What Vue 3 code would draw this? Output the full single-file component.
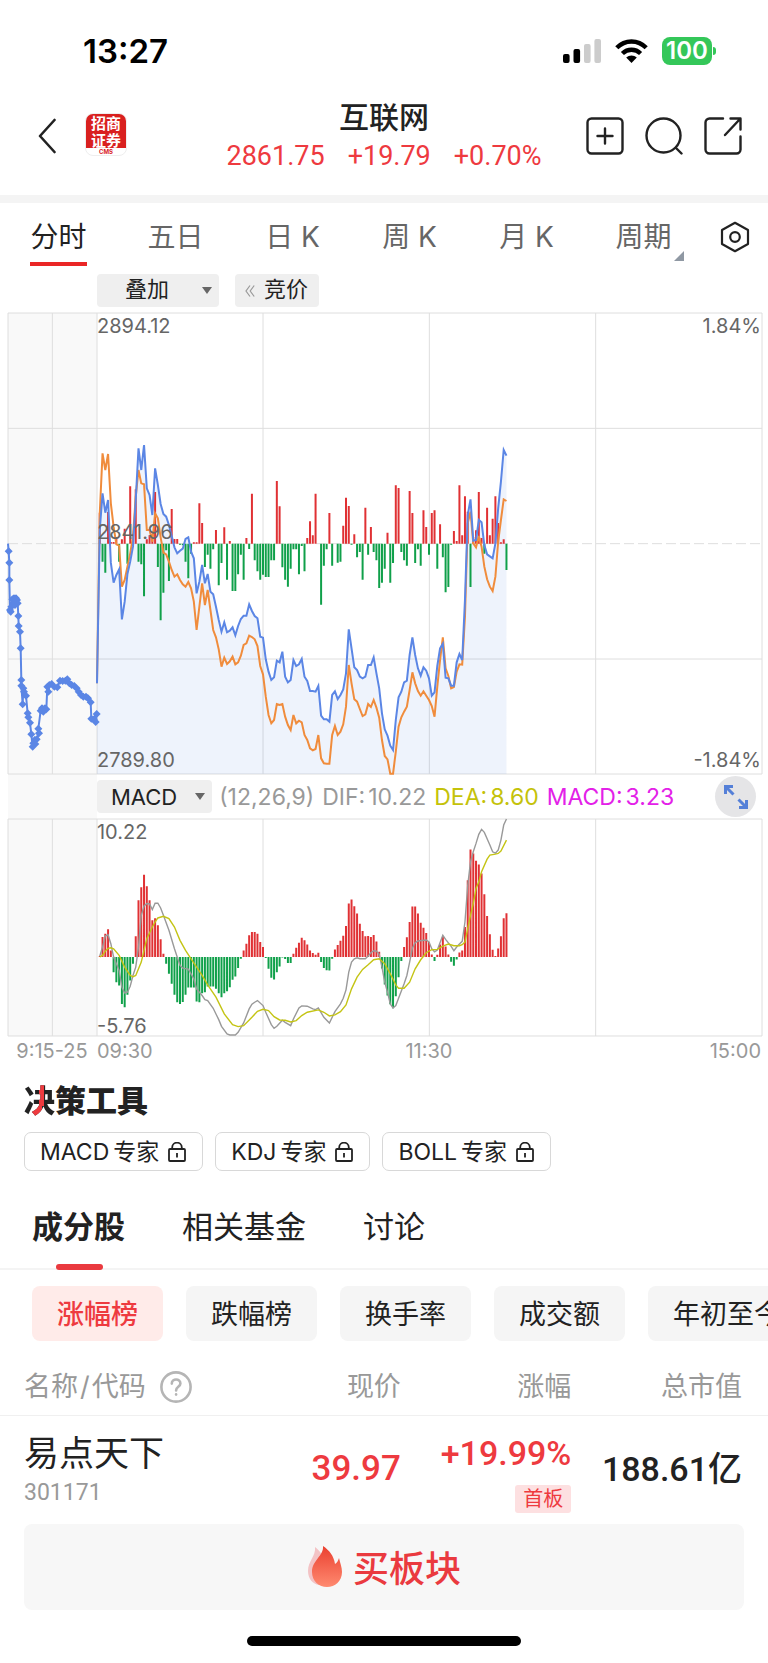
<script setup>
/**
 * 板块行情页 — 分时走势 + MACD + 成分股
 */
import { ref, computed } from 'vue'

const periods = ['分时', '五日', '日 K', '周 K', '月 K', '周期']
const activePeriod = ref(0)

const tools = ['MACD', 'KDJ', 'BOLL']

const sections = ['成分股', '相关基金', '讨论']
const activeSection = ref(0)

const ranks = ['涨幅榜', '跌幅榜', '换手率', '成交额', '年初至今']
const activeRank = ref(0)

const stocks = [
  { name: '易点天下', code: '301171', price: '39.97', change: '+19.99%', tag: '首板', cap: '188.61亿' }
]

// ===== 坐标 =====
// 图表单位为三分之一像素，每分钟一个点
const OPEN_X = 267
const STEP = 8.3
const PRICE_TOP = 351
const PRICE_ZERO = 692
const PRICE_H = 1383
const MACD_TOP = -12
const MACD_ZERO = 413

const minuteX = i => Math.round((OPEN_X + i * STEP) * 10) / 10

// ===== 分时数据 =====
const blue = [
  760, 300, 190, 248, 210, 398, 458, 435, 418, 568, 515, 432, 395, 350, 210, 55, 120, 45, 175, 195,
  255, 115, 165, 222, 252, 260, 285, 318, 352, 370, 362, 356, 327, 322, 365, 385, 490, 455, 405, 460,
  432, 485, 493, 530, 570, 605, 577, 607, 602, 592, 616, 588, 567, 557, 557, 523, 543, 558, 565, 620,
  623, 688, 725, 750, 742, 692, 697, 665, 740, 757, 750, 690, 708, 703, 687, 740, 753, 783, 783, 785,
  768, 857, 868, 868, 875, 795, 784, 807, 795, 778, 730, 598, 655, 712, 720, 740, 745, 740, 705, 705,
  682, 730, 775, 850, 898, 917, 947, 960, 870, 802, 785, 757, 752, 675, 622, 675, 715, 737, 712, 722,
  745, 797, 787, 708, 655, 641, 743, 745, 767, 767, 697, 672, 690, 510, 255, 208, 332, 330, 270, 277,
  345, 373, 379, 385, 340, 235, 155, 60, 77
]

const orange = [
  760, 250, 70, 120, 72, 220, 290, 343, 347, 470, 450, 410, 370, 320, 200, 120, 160, 163, 300, 300,
  335, 250, 265, 322, 368, 373, 395, 420, 440, 433, 450, 463, 470, 456, 475, 515, 600, 530, 460, 525,
  480, 540, 600, 622, 658, 710, 683, 702, 694, 680, 703, 697, 677, 645, 640, 617, 621, 628, 648, 708,
  733, 800, 855, 880, 870, 822, 825, 822, 860, 885, 900, 855, 880, 872, 877, 915, 930, 955, 961, 957,
  915, 985, 1000, 1001, 1001, 915, 888, 915, 905, 883, 830, 705, 760, 808, 815, 837, 858, 853, 822, 831,
  810, 833, 863, 930, 978, 988, 1031, 1031, 965, 890, 862, 845, 830, 780, 727, 760, 783, 797, 784, 797,
  810, 828, 860, 770, 690, 622, 715, 738, 775, 771, 725, 703, 704, 560, 280, 245, 340, 352, 318, 350,
  410, 448, 470, 483, 440, 335, 270, 208, 213
]

// 红正绿负
const flow = [
  0, 93, -54, -87, 95, 5, 5, 20, -54, 13, 45, -60, 172, 30, 163, -54, -62, -158, 13, 25,
  30, 155, -70, -230, -147, -20, -112, 104, 14, 14, -3, -5, -54, -104, -30, 4, 4, 121, 62, -70,
  -33, -75, -17, 41, -125, -58, 49, -108, 8, -142, -142, -92, -33, -108, 17, -16, 150, -50, -83, -108,
  -93, -100, -100, -50, -50, 188, 112, -71, -108, -129, -75, -17, -17, -92, -7, -83, 17, 67, 25, 150,
  0, -183, -66, -17, 92, -66, 0, -57, -54, 54, 138, 113, -3, 28, -41, -25, -108, 108, -33, 50,
  -25, -50, -133, -117, -75, 33, -117, -58, 175, 167, -25, -50, -66, 158, 92, -58, -17, -66, 100, 50,
  -33, 92, 100, -75, 58, -41, -146, -130, -3, 38, 8, 175, 25, 142, 96, -130, 20, 40, 155, 17,
  -30, 108, 25, 75, 142, 62, 4, 13, -79
]

// 集合竞价
const auction = [
  [26, 724], [28, 758], [28, 810], [30, 900], [32, 905], [34, 890], [37, 868], [39, 880], [42, 865],
  [45, 885], [48, 865], [51, 870], [53, 880], [55, 918], [56, 948], [60, 965], [62, 1015], [64, 1110],
  [64, 1127], [68, 1183], [70, 1135], [72, 1145], [78, 1157], [83, 1210], [85, 1222], [90, 1238],
  [94, 1273], [98, 1310], [100, 1300], [104, 1290], [106, 1302], [110, 1288], [117, 1270], [115, 1256],
  [122, 1202], [126, 1195], [130, 1205], [135, 1195], [139, 1198], [142, 1130], [145, 1145], [148, 1125],
  [155, 1122], [163, 1130], [172, 1132], [180, 1112], [188, 1113], [196, 1112], [202, 1108], [208, 1120],
  [215, 1125], [223, 1128], [230, 1135], [236, 1145], [243, 1155], [250, 1160], [258, 1160], [264, 1165],
  [272, 1177], [274, 1226], [282, 1228], [287, 1236], [290, 1212]
].map(([x, y]) => [x - 24, y - 9])

// ===== MACD 数据 =====
const macd = [
  0, 3, 60, 70, 83, 20, -45, -75, -85, -140, -150, -113, -70, -20, 62, 170, 209, 246, 212, 170,
  110, 116, 95, 53, 10, -20, -50, -80, -113, -135, -140, -134, -113, -91, -91, -91, -133, -135, -108, -105,
  -88, -88, -88, -95, -108, -120, -108, -102, -90, -68, -58, -33, -5, 20, 40, 65, 75, 75, 70, 45,
  30, -3, -35, -62, -67, -45, -28, -1, -6, -18, -18, 10, 28, 43, 58, 50, 38, 20, 12, 7,
  13, -15, -33, -39, -40, -5, 23, 36, 49, 64, 93, 160, 172, 152, 130, 100, 78, 62, 63, 60,
  66, 47, 16, -34, -82, -115, -141, -153, -117, -60, -12, 30, 59, 105, 151, 151, 130, 103, 88, 72,
  45, 8, -12, 7, 38, 60, 32, 8, -14, -26, -7, 14, 20, 90, 230, 322, 310, 288, 277, 250,
  188, 123, 68, 22, 3, 26, 62, 116, 131
]

const dif = [
  [1, 422], [2, 395], [3, 362], [4, 358], [5, 385], [6, 425], [8, 465], [9, 515], [10, 532], [11, 530],
  [12, 512], [13, 480], [14, 455], [15, 395], [16, 300], [17, 272], [18, 265], [19, 266], [20, 283],
  [21, 264], [22, 264], [23, 278], [24, 300], [26, 345], [28, 400], [30, 450], [31, 458], [33, 461],
  [35, 490], [36, 520], [38, 540], [39, 552], [40, 555], [42, 578], [43, 595], [44, 612], [45, 632],
  [47, 655], [48, 658], [50, 658], [51, 650], [53, 622], [55, 580], [56, 566], [57, 560], [58, 555],
  [60, 570], [61, 590], [63, 627], [64, 638], [65, 632], [67, 614], [68, 620], [70, 630], [71, 610],
  [73, 577], [74, 571], [76, 572], [78, 580], [79, 582], [80, 577], [82, 605], [84, 622], [86, 588],
  [88, 565], [89, 548], [90, 523], [91, 470], [92, 440], [93, 430], [94, 427], [95, 430], [97, 430],
  [98, 422], [99, 412], [100, 406], [101, 407], [102, 417], [103, 455], [104, 500], [105, 530],
  [106, 565], [107, 577], [108, 570], [109, 548], [111, 505], [112, 480], [113, 440], [114, 398],
  [115, 382], [116, 377], [119, 374], [120, 380], [121, 400], [122, 409], [123, 404], [125, 360],
  [126, 372], [128, 393], [129, 406], [130, 395], [131, 386], [132, 378], [133, 320], [134, 210],
  [135, 140], [136, 110], [137, 85], [138, 58], [139, 43], [140, 52], [142, 90], [143, 110], [144, 114],
  [145, 105], [146, 75], [147, 30], [148, 12]
]

const dea = [
  [1, 424], [2, 420], [3, 407], [4, 399], [5, 397], [6, 400], [8, 420], [10, 455], [12, 480], [13, 484],
  [14, 480], [16, 440], [18, 370], [20, 335], [21, 320], [22, 308], [24, 303], [26, 310], [28, 335],
  [30, 375], [32, 405], [34, 430], [38, 480], [40, 508], [43, 545], [46, 595], [49, 627], [51, 633],
  [53, 630], [56, 605], [58, 587], [60, 581], [62, 585], [64, 603], [66, 613], [68, 614], [70, 619],
  [72, 615], [74, 600], [76, 590], [80, 583], [82, 590], [84, 601], [86, 598], [88, 588], [90, 568],
  [92, 520], [94, 485], [96, 462], [98, 448], [100, 433], [102, 430], [104, 445], [106, 475],
  [108, 508], [109, 518], [111, 518], [113, 500], [115, 460], [117, 433], [119, 412], [121, 403],
  [123, 402], [125, 392], [127, 386], [129, 391], [131, 391], [132, 388], [133, 380], [134, 340],
  [135, 300], [136, 265], [137, 220], [138, 200], [139, 170], [141, 132], [142, 120], [144, 117],
  [145, 115], [146, 108], [148, 75]
]

// ===== 路径 =====
const toLine = pts => 'M' + pts.map(p => p.join(' ')).join('L')
const priceLine = ys => toLine(ys.map((y, i) => [minuteX(i), y + PRICE_TOP]))
const macdLine = pts => toLine(pts.map(([i, y]) => [minuteX(i), y + MACD_TOP]))

function barPath(list, zero, up) {
  return list
    .map((v, i) => ((up ? v > 0 : v < 0) ? `M${minuteX(i)} ${zero}v${-v}` : ''))
    .join('')
}

const bluePath = computed(() => priceLine(blue))
const orangePath = computed(() => priceLine(orange))
const areaPath = computed(() => `${bluePath.value}V${PRICE_H}H${OPEN_X}Z`)
const auctionPath = computed(() => toLine([[0, PRICE_ZERO], ...auction]))
const auctionDots = auction.map(([x, y]) => `M${x - 12} ${y}l12 -12l12 12l-12 12z`).join('')
</script>

<template>
  <div class="page">
    <!-- 系统状态栏 -->
    <div class="status-bar">
      <span class="clock">13:27</span>
      <div class="status-icons">
        <svg class="signal" viewBox="0 0 38 24">
          <rect x="0" y="15" width="6.6" height="9" rx="2" fill="#000" />
          <rect x="10.5" y="10" width="6.6" height="14" rx="2" fill="#000" />
          <rect x="21" y="5" width="6.6" height="19" rx="2" fill="#ccc" />
          <rect x="31.4" y="0" width="6.6" height="24" rx="2" fill="#ccc" />
        </svg>
        <svg class="wifi" viewBox="0 0 33 24">
          <g fill="none" stroke="#000" stroke-width="4.4">
            <path d="M1.8 8.8C10 0.3 23 0.3 31.2 8.8" />
            <path d="M7.4 14.5c5.2-5.1 13-5.1 18.2 0" />
          </g>
          <path d="M11.2 18.4c3-2.7 7.6-2.7 10.6 0L16.5 24z" fill="#000" />
        </svg>
        <span class="battery">100</span>
      </div>
    </div>

    <!-- 标题栏 -->
    <header class="header">
      <div class="header-left">
        <button class="icon-btn" aria-label="返回">
          <svg class="back" viewBox="0 0 18 36" fill="none" stroke="#222" stroke-width="2.6" stroke-linecap="round" stroke-linejoin="round">
            <path d="M16.5 2L2 18l14.5 16" />
          </svg>
        </button>
        <div class="logo">
          <div class="logo-mark"><span>招商</span><span>证券</span></div>
          <span class="logo-sub">CMS</span>
        </div>
      </div>
      <div class="header-title">
        <h1>互联网</h1>
        <p class="quote"><span>2861.75</span><span>+19.79</span><span>+0.70%</span></p>
      </div>
      <div class="header-right">
        <button class="icon-btn" aria-label="添加">
          <svg viewBox="0 0 38 38" fill="none" stroke="#222" stroke-width="2.4" stroke-linecap="round">
            <rect x="1.5" y="1.5" width="35" height="35" rx="4" />
            <path d="M19 11.5v15M11.5 19h15" />
          </svg>
        </button>
        <button class="icon-btn" aria-label="搜索">
          <svg viewBox="0 0 38 38" fill="none" stroke="#222" stroke-width="2.4" stroke-linecap="round">
            <circle cx="18.5" cy="18.5" r="17" />
            <path d="M31 31l5.5 5.5" />
          </svg>
        </button>
        <button class="icon-btn" aria-label="分享">
          <svg viewBox="0 0 38 38" fill="none" stroke="#222" stroke-width="2.4" stroke-linecap="round" stroke-linejoin="round">
            <path d="M19 1.5H5.5a4 4 0 0 0-4 4v27a4 4 0 0 0 4 4h27a4 4 0 0 0 4-4V19.5" />
            <path d="M26.5 1.5h10v11M36 2L21 18" />
          </svg>
        </button>
      </div>
    </header>

    <!-- 周期切换 -->
    <nav class="periods">
      <button
        v-for="(p, i) in periods"
        :key="p"
        class="period"
        :class="{ active: i === activePeriod, more: i === periods.length - 1 }"
        @click="activePeriod = i"
      >
        <span>{{ p }}</span>
      </button>
      <button class="icon-btn setting" aria-label="设置">
        <svg viewBox="0 0 30 32" fill="none" stroke="#222" stroke-width="2.2" stroke-linejoin="round">
          <path d="M15 1.8L28 9v14L15 30.2 2 23V9z" />
          <circle cx="15" cy="16" r="4.8" />
        </svg>
      </button>
    </nav>

    <section class="charts">
      <div class="chart-bar overlay-bar">
        <button class="mini overlay-btn"><span>叠加</span><i class="caret"></i></button>
        <button class="mini">
          <svg class="angles" viewBox="0 0 10 12" fill="none" stroke="#999" stroke-width="1.2">
            <path d="M5 0.5L1 6l4 5.5M9.2 0.5L5.2 6l4 5.5" />
          </svg>
          <span>竞价</span>
        </button>
      </div>

      <!-- 分时图 -->
      <div class="chart">
        <svg class="price-svg" viewBox="0 0 2262 1383" preserveAspectRatio="none">
          <rect width="267" height="1383" fill="#f9f9f9" />
          <path class="grid" d="M0 0H2262V1383H0ZM0 346H2262M0 1038H2262M133 0V1383M267 0V1383M765 0V1383M1264 0V1383M1763 0V1383" />
          <path class="grid dashed" d="M0 692H2262" />
          <path :d="areaPath" fill="#5b86e5" fill-opacity="0.1" />
          <path class="bars up" :d="barPath(flow, PRICE_ZERO, true)" />
          <path class="bars down" :d="barPath(flow, PRICE_ZERO, false)" />
          <path class="line orange" :d="orangePath" />
          <path class="line blue" :d="bluePath" />
          <path class="line blue" :d="auctionPath" />
          <path :d="auctionDots" fill="#5b86e5" />
        </svg>
        <span class="label left top">2894.12</span>
        <span class="label left middle">2841.96</span>
        <span class="label left bottom">2789.80</span>
        <span class="label right top">1.84%</span>
        <span class="label right bottom">-1.84%</span>
      </div>

      <div class="chart-bar macd-bar">
        <button class="mini macd-btn"><span>MACD</span><i class="caret"></i></button>
        <div class="readings">
          <p class="gray">(12,26,9)</p>
          <p class="gray"><span>DIF:</span><span>10.22</span></p>
          <p class="yellow"><span>DEA:</span><span>8.60</span></p>
          <p class="pink"><span>MACD:</span><span>3.23</span></p>
        </div>
        <button class="expand" aria-label="全屏">
          <svg viewBox="0 0 24 24" fill="none" stroke="#5580d8" stroke-width="3">
            <path d="M1.5 9V1.5H9M2 2l7.5 7.5M22.5 15v7.5H15M22 22l-7.5-7.5" />
          </svg>
        </button>
      </div>

      <!-- MACD 副图 -->
      <div class="chart">
        <svg class="macd-svg" viewBox="0 0 2262 649" preserveAspectRatio="none">
          <rect width="267" height="649" fill="#f9f9f9" />
          <path class="grid" d="M0 0H2262V649H0ZM133 0V649M267 0V649M765 0V649M1264 0V649M1763 0V649" />
          <path class="bars up" :d="barPath(macd, MACD_ZERO, true)" />
          <path class="bars down" :d="barPath(macd, MACD_ZERO, false)" />
          <path class="line dif" stroke-width="1.4" :d="macdLine(dif)" />
          <path class="line dea" stroke-width="1.4" :d="macdLine(dea)" />
        </svg>
        <span class="label left top">10.22</span>
        <span class="label left low">-5.76</span>
      </div>

      <div class="axis">
        <span class="axis-auction">9:15-25</span>
        <div class="axis-day"><span>09:30</span><span>11:30</span><span>15:00</span></div>
      </div>
    </section>

    <!-- 决策工具 -->
    <section class="tools">
      <h2><span class="accent">决</span>策工具</h2>
      <div class="tool-list">
        <button v-for="t in tools" :key="t" class="tool">
          <span>{{ t }}<b>专家</b></span>
          <svg viewBox="0 0 18 20" fill="none" stroke="#222" stroke-width="1.8" stroke-linejoin="round">
            <rect x="1" y="7" width="16" height="12" rx="1" />
            <path d="M4.2 7V5.5a4.8 4.8 0 0 1 9.6 0V7M9 11v4.5" />
          </svg>
        </button>
      </div>
    </section>

    <nav class="sections">
      <button
        v-for="(s, i) in sections"
        :key="s"
        :class="{ active: i === activeSection }"
        @click="activeSection = i"
      >{{ s }}</button>
    </nav>

    <div class="ranks">
      <button
        v-for="(r, i) in ranks"
        :key="r"
        :class="{ active: i === activeRank }"
        @click="activeRank = i"
      >{{ r }}</button>
    </div>

    <table class="stocks">
      <thead>
        <tr>
          <th class="col-name">
            <div class="name-head">
              <span>名称<i>/</i>代码</span>
              <svg viewBox="0 0 32 32" fill="none" stroke="#b5b5b5" stroke-width="2.6" stroke-linecap="round">
                <circle cx="16" cy="16" r="14.6" />
                <path d="M11.8 12.6c0-5.4 8.6-5.4 8.6-.2 0 3.4-4.3 3.4-4.3 7" />
                <path d="M16.1 23.4v.2" />
              </svg>
            </div>
          </th>
          <th class="col-price">现价</th>
          <th class="col-change">涨幅</th>
          <th class="col-cap">总市值</th>
        </tr>
      </thead>
      <tbody>
        <tr v-for="s in stocks" :key="s.code">
          <td>
            <div class="name">{{ s.name }}</div>
            <div class="code">{{ s.code }}</div>
          </td>
          <td class="num red">{{ s.price }}</td>
          <td>
            <div class="change red">{{ s.change }}</div>
            <span class="tag">{{ s.tag }}</span>
          </td>
          <td class="num">{{ s.cap }}</td>
        </tr>
      </tbody>
    </table>

    <footer class="footer">
      <button class="buy">
        <svg viewBox="0 0 36 42">
          <defs>
            <linearGradient id="flame" x1="0" y1="0" x2="0" y2="1">
              <stop offset="0" stop-color="#ea4030" />
              <stop offset="1" stop-color="#ff8a70" />
            </linearGradient>
          </defs>
          <path d="M8 1c1 9-7 14-7 24 0 8 5 13 11 14l6-20C17 10 13 5 8 1z" fill="#f3c3c5" />
          <path d="M16 0c1 10-11 14-11 26 0 9 7 15 15 15s15-6 15-15c0-5-2-9-3-14-1 3-2 5-4 6C27 10 22 4 16 0z" fill="url(#flame)" />
        </svg>
        <span>买板块</span>
      </button>
      <div class="home-bar"></div>
    </footer>
  </div>
</template>

<style>
body {
  background: #fff;
}
</style>

<style scoped>
.page {
  overflow: hidden;
  color: #222;
  background: #fff;
  font-family: Inter, 'Noto Sans CJK SC', sans-serif;
}

button {
  padding: 0;
  border: 0;
  background: none;
  color: inherit;
  font: inherit;
  white-space: nowrap;
  cursor: pointer;
}

h1, h2, p {
  margin: 0;
}

svg {
  display: block;
  flex-shrink: 0;
}

.red {
  color: #ee3a3f;
}

/* 状态栏 */
.status-bar {
  display: flex;
  align-items: center;
  justify-content: space-between;
  height: 58px;
  padding: 22px 52px 0 83px;
  color: #000;
}

.clock {
  font-size: 33px;
  font-weight: 600;
  line-height: 40px;
}

.status-icons {
  display: flex;
  align-items: center;
  gap: 14px;
}

.signal {
  width: 38px;
  height: 24px;
}

.wifi {
  width: 33px;
  height: 24px;
}

.battery {
  position: relative;
  width: 50px;
  margin-right: 4px;
  border-radius: 8px;
  background: #34c759;
  color: #fff;
  font-size: 24px;
  font-weight: 600;
  line-height: 28px;
  text-align: center;
}

.battery::after {
  content: '';
  position: absolute;
  top: 10px;
  right: -4px;
  width: 3px;
  height: 8px;
  border-radius: 0 3px 3px 0;
  background: #34c759;
}

/* 标题栏 */
.header {
  display: grid;
  grid-template-columns: 1fr auto 1fr;
  align-items: center;
  height: 112px;
  padding: 0 26px 3px;
  border-bottom: 8px solid #f4f4f4;
}

.header-left,
.header-right {
  display: flex;
  align-items: center;
}

.header-left {
  gap: 29px;
  padding-left: 12px;
}

.header-right {
  justify-content: flex-end;
  gap: 21px;
}

.header-right svg {
  width: 38px;
  height: 38px;
}

.back {
  width: 18px;
  height: 36px;
}

.logo {
  width: 42px;
  margin-bottom: 4px;
  overflow: hidden;
  border: 1px solid #eee;
  border-radius: 8px;
  box-sizing: border-box;
  text-align: center;
}

.logo-mark {
  display: flex;
  flex-direction: column;
  background: #d9201f;
  color: #fff;
  font-family: 'Noto Sans CJK SC', sans-serif;
  font-size: 15px;
  font-weight: 700;
  line-height: 17px;
}

.logo-sub {
  display: block;
  color: #d9201f;
  font-size: 6px;
  font-weight: 700;
  line-height: 7px;
}

.header-title {
  text-align: center;
}

.header-title h1 {
  font-size: 30px;
  font-weight: 500;
  line-height: 38px;
}

.quote {
  display: flex;
  justify-content: center;
  gap: 23px;
  padding-top: 2px;
  color: #ee3a3f;
  font-family: Roboto, sans-serif;
  font-size: 27px;
  line-height: 36px;
}

/* 周期 */
.periods {
  display: flex;
  height: 67px;
}

.period {
  flex: 117;
  display: flex;
  justify-content: center;
  align-items: flex-start;
  padding-top: 9px;
  color: #666;
  font-size: 28px;
}

.period span {
  position: relative;
  line-height: 50px;
  border-bottom: 4px solid transparent;
}

.period.active {
  color: #222;
}

.period.active span {
  border-color: #ea2626;
}

.period.more span::after {
  content: '';
  position: absolute;
  right: -12px;
  bottom: 1px;
  border-left: 10px solid transparent;
  border-bottom: 10px solid #8f98a3;
}

.setting {
  flex: 66;
  display: flex;
  justify-content: center;
  align-items: center;
}

.setting svg {
  width: 30px;
  height: 32px;
}

/* 图表 */
.charts {
  margin: 0 6px 0 8px;
}

.chart-bar {
  display: flex;
  padding-left: 11.8%;
}

.overlay-bar {
  gap: 16px;
  padding-top: 4px;
  padding-bottom: 6px;
}

.mini {
  display: flex;
  align-items: center;
  height: 33px;
  padding: 0 11px 0 10px;
  border-radius: 4px;
  background: #efefef;
  font-size: 22px;
  line-height: 30px;
}

.overlay-bar .mini span {
  padding-bottom: 3px;
}

.overlay-btn {
  gap: 33px;
  padding: 0 7px 0 28px;
}

.macd-btn {
  gap: 18px;
  padding: 0 7px 0 14px;
}

.caret {
  border: 5px solid transparent;
  border-top: 7px solid #666;
  border-bottom: 0;
}

.angles {
  width: 10px;
  height: 12px;
  margin-right: 9px;
}

.chart {
  position: relative;
}

.price-svg,
.macd-svg {
  width: 100%;
  overflow: visible;
}

.price-svg {
  height: 461px;
}

.macd-svg {
  height: 217px;
}

.chart path {
  vector-effect: non-scaling-stroke;
}

.grid {
  fill: none;
  stroke: #dedede;
  stroke-width: 1px;
}

.dashed {
  stroke-dasharray: 10 4;
}

.bars {
  stroke-width: 2px;
}

.up {
  stroke: #e03134;
}

.down {
  stroke: #10a04a;
}

.line {
  fill: none;
}

.blue,
.orange {
  stroke-width: 2px;
}

.blue {
  stroke: #5b86e5;
}

.orange {
  stroke: #f08c3c;
}

.dif {
  stroke: #999;
}

.dea {
  stroke: #c4c414;
}

.label {
  position: absolute;
  color: #666;
  font-size: 20px;
  line-height: 24px;
}

.left {
  left: 11.8%;
}

.right {
  right: 1px;
}

.top {
  top: 1px;
}

.middle {
  top: 207px;
}

.bottom {
  bottom: 2px;
}

.low {
  bottom: -2px;
}

.macd-bar {
  align-items: center;
  height: 45px;
  background: linear-gradient(#f9f9f9, #f9f9f9) 0 0 / 11.8% 100% no-repeat;
}

.readings {
  display: flex;
  gap: 8px;
  margin-left: 7px;
  font-size: 23px;
  line-height: 30px;
  white-space: nowrap;
}

.readings p {
  display: flex;
  gap: 3px;
}

.gray {
  color: #999;
}

.yellow {
  color: #c4c20a;
}

.pink {
  color: #e321e8;
}

.expand {
  display: flex;
  align-items: center;
  justify-content: center;
  width: 41px;
  height: 41px;
  margin: 0 6px 0 auto;
  border-radius: 50%;
  background: #e5e5e7;
}

.expand svg {
  width: 24px;
  height: 24px;
}

.axis {
  display: flex;
  height: 28px;
  color: #999;
  font-size: 20px;
  line-height: 30px;
}

.axis-auction {
  width: 11.8%;
  padding-right: 1px;
  box-sizing: border-box;
  text-align: center;
}

.axis-day {
  flex: 1;
  display: grid;
  grid-template-columns: 1fr auto 1fr;
  padding-right: 1px;
}

.axis-day span:last-child {
  text-align: right;
}

/* 决策工具 */
.tools {
  padding: 16px 24px 0;
}

.tools h2 {
  font-size: 31px;
  font-weight: 900;
  line-height: 42px;
}

/* “决”字中间一笔为红色 */
.accent {
  background:
    linear-gradient(#ee3a3f, #ee3a3f) 15px 0 / 5px 24px no-repeat,
    linear-gradient(#ee3a3f, #ee3a3f) 8px 24px / 10px 20px no-repeat,
    #222;
  background-clip: text;
  color: transparent;
}

.tool-list {
  display: flex;
  gap: 12px;
  margin-top: 10px;
}

.tool {
  display: flex;
  align-items: center;
  gap: 9px;
  height: 39px;
  padding: 0 16px 0 15px;
  border: 1px solid #d8d8d8;
  border-radius: 7px;
  box-sizing: border-box;
  font-size: 23px;
  line-height: 32px;
}

.tool b {
  margin-left: 4px;
  font-weight: 400;
}

.tool svg {
  width: 18px;
  height: 20px;
}

/* 栏目 */
.sections {
  display: flex;
  gap: 57px;
  padding: 24px 32px 0;
  border-bottom: 2px solid #f4f4f4;
}

.sections button {
  position: relative;
  padding-bottom: 9px;
  font-size: 31px;
  line-height: 64px;
}

.sections .active {
  font-weight: 700;
}

.sections .active::after {
  content: '';
  position: absolute;
  bottom: -2px;
  left: 50%;
  width: 47px;
  height: 6px;
  margin-left: -23px;
  border-radius: 3px;
  background: #ea3a3f;
}

.ranks {
  display: flex;
  gap: 23px;
  padding: 16px 0 0 32px;
  overflow: hidden;
}

.ranks button {
  flex-shrink: 0;
  height: 55px;
  padding: 0 25px 2px;
  border-radius: 8px;
  background: #f5f5f5;
  font-size: 27px;
}

.ranks .active {
  background: #ffebe9;
  color: #ee3a3f;
  font-weight: 500;
}

/* 成分股表格 */
.stocks {
  width: 100%;
  table-layout: fixed;
  border-collapse: collapse;
}

.stocks th {
  box-sizing: border-box;
  padding: 22px 0 4px;
  border-bottom: 1px solid #f0f0f0;
  color: #999;
  font-size: 27px;
  font-weight: 400;
  line-height: 48px;
  text-align: right;
  white-space: nowrap;
}

.stocks .col-name {
  width: 30%;
}

.stocks .col-price,
.stocks .col-change {
  width: 22.2%;
}

.name-head {
  display: flex;
  align-items: center;
  gap: 14px;
}

.name-head i {
  margin: 0 2px;
  font-style: normal;
}

.name-head svg {
  width: 32px;
  height: 32px;
}

.stocks td {
  height: 96px;
  padding: 12px 0 0;
  vertical-align: top;
  text-align: right;
  white-space: nowrap;
}

.stocks th:first-child,
.stocks td:first-child {
  padding-left: 24px;
  text-align: left;
}

.stocks th:last-child,
.stocks td:last-child {
  padding-right: 26px;
}

.name {
  font-size: 35px;
  line-height: 50px;
}

.code {
  color: #999;
  font-family: Roboto, sans-serif;
  font-size: 23px;
  line-height: 30px;
}

.num,
.change {
  font-family: Roboto, 'Noto Sans CJK SC', sans-serif;
  font-weight: 500;
}

.stocks .num {
  font-size: 35px;
  line-height: 82px;
}

.stocks td.num:last-child {
  font-size: 34px;
}

.change {
  font-size: 34px;
  line-height: 50px;
}

.tag {
  display: inline-block;
  margin-top: 7px;
  padding: 0 8px;
  border-radius: 3px;
  background: #fde0e1;
  color: #ee3a3f;
  font-size: 20px;
  line-height: 28px;
}

/* 底部 */
.footer {
  padding: 0 24px 17px;
}

.buy {
  display: flex;
  align-items: center;
  justify-content: center;
  gap: 10px;
  width: 100%;
  height: 86px;
  border-radius: 8px;
  background: #f7f7f7;
  color: #ea3a3f;
  font-size: 36px;
  font-weight: 500;
}

.buy span {
  padding-bottom: 3px;
}

.buy svg {
  width: 36px;
  height: 42px;
}

.home-bar {
  width: 274px;
  height: 10px;
  margin: 26px auto 0;
  border-radius: 5px;
  background: #000;
}
</style>
